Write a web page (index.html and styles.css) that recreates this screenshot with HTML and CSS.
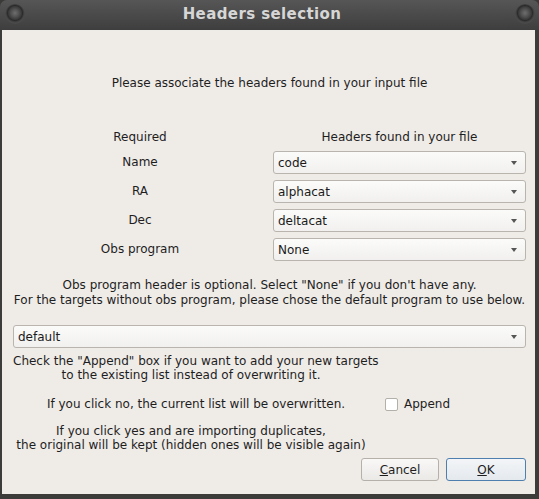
FILE: index.html
```html
<!DOCTYPE html>
<html>
<head>
<meta charset="utf-8">
<link rel="stylesheet" href="styles.css">
</head>
<body>
<div class="frame">
  <div class="titlebar">
    <span class="knob"></span>
    <span class="title">Headers selection</span>
    <span class="knob"></span>
  </div>
  <div class="content">
    <div class="intro">Please associate the headers found in your input file</div>
    <div class="grid">
      <div class="colhead">Required</div>
      <div class="colhead">Headers found in your file</div>
      <div class="label">Name</div>
      <div class="combo"><span>code</span><i class="arrow"></i></div>
      <div class="label">RA</div>
      <div class="combo"><span>alphacat</span><i class="arrow"></i></div>
      <div class="label">Dec</div>
      <div class="combo"><span>deltacat</span><i class="arrow"></i></div>
      <div class="label">Obs program</div>
      <div class="combo"><span>None</span><i class="arrow"></i></div>
    </div>
    <div class="note">Obs program header is optional. Select "None" if you don't have any.<br>For the targets without obs program, please chose the default program to use below.</div>
    <div class="combo wide"><span>default</span><i class="arrow"></i></div>
    <div class="block check">Check the "Append" box if you want to add your new targets<br>to the existing list instead of overwriting it.</div>
    <div class="norow">
      <div class="notext">If you click no, the current list will be overwritten.</div>
      <label class="append"><span class="box"></span>Append</label>
    </div>
    <div class="block yes">If you click yes and are importing duplicates,<br>the original will be kept (hidden ones will be visible again)</div>
    <div class="buttons">
      <button class="btn"><u>C</u>ancel</button>
      <button class="btn ok"><u>O</u>K</button>
    </div>
  </div>
</div>
</body>
</html>
```
FILE: styles.css
```css
html, body {
  margin: 0;
  padding: 0;
  background: #3a3a38;
}
.frame {
  width: 539px;
  height: 499px;
  box-sizing: border-box;
  padding: 0 4px 5px 2px;
  background: #3c3c3a;
  border-radius: 7px 7px 0 0;
  display: flex;
  flex-direction: column;
  font-family: "DejaVu Sans", sans-serif;
  font-size: 12px;
  color: #1e1e1e;
}
.titlebar {
  height: 30px;
  display: flex;
  align-items: center;
  margin: 0 -4px 0 -2px;
  padding: 0 4px 2px 5px;
  box-sizing: border-box;
  background: linear-gradient(#565656, #3e3e3e);
  border-radius: 7px 7px 0 0;
}
.knob {
  width: 20px;
  height: 20px;
  border-radius: 50%;
  box-sizing: border-box;
  background: radial-gradient(circle at 50% 45%, #6e6e6e 0, #505050 4px, #3a3a3a 6.5px, #2b2b2b 7.5px, #444 9px, #4a4a4a 10px);
}
.title {
  flex: 1;
  text-align: center;
  padding-right: 16px;
  font-weight: bold;
  font-size: 15px;
  letter-spacing: 0.4px;
  color: #d6d6d6;
}
.content {
  flex: 1;
  background: #efebe7;
  padding: 45px 9px 0 11px;
  display: flex;
  flex-direction: column;
}
.intro {
  text-align: center;
  line-height: 16px;
}
.grid {
  margin-top: 38px;
  display: grid;
  grid-template-columns: 256px 253px;
  column-gap: 5px;
  row-gap: 6px;
  margin-left: -1px;
}
.colhead, .label {
  text-align: center;
  line-height: 16px;
}
.label {
  line-height: 23px;
}
.combo {
  height: 23px;
  box-sizing: border-box;
  border: 1px solid #b9b5ae;
  border-radius: 3px;
  background: linear-gradient(#fbfbfa, #f1f0ee);
  display: flex;
  align-items: center;
  justify-content: space-between;
  padding: 0 8px 0 4px;
  color: #1a1a1a;
}
.arrow {
  width: 0;
  height: 0;
  border-left: 3.5px solid transparent;
  border-right: 3.5px solid transparent;
  border-top: 4px solid #555;
}
.note {
  margin-top: 17px;
  text-align: center;
  line-height: 15px;
}
.wide {
  margin-top: 17px;
}
.block {
  width: 356px;
  white-space: nowrap;
  text-align: center;
  line-height: 14px;
}
.check {
  margin-top: 6px;
}
.norow {
  margin-top: 14px;
  display: flex;
  align-items: center;
  height: 16px;
}
.notext {
  width: 366px;
  text-align: center;
}
.append {
  display: flex;
  align-items: center;
  margin-left: 6px;
}
.box {
  width: 13px;
  height: 13px;
  box-sizing: border-box;
  border: 1px solid #b3afa9;
  border-radius: 2px;
  background: #fff;
  margin-right: 6px;
}
.yes {
  margin-top: 13px;
  line-height: 13.5px;
}
.buttons {
  margin-top: 6px;
  display: flex;
  justify-content: flex-end;
  gap: 7px;
}
.btn {
  font-family: "DejaVu Sans", sans-serif;
  font-size: 12px;
  color: #1e1e1e;
  height: 23px;
  width: 78px;
  box-sizing: border-box;
  border: 1px solid #b5b1aa;
  border-radius: 3px;
  background: linear-gradient(#f9f8f7, #ebe9e6);
  padding: 0;
}
.btn u {
  text-decoration: underline;
}
.ok {
  width: 80px;
  border-color: #4f7fae;
  background: linear-gradient(#f3f5f7, #e4e9ee);
}
```
